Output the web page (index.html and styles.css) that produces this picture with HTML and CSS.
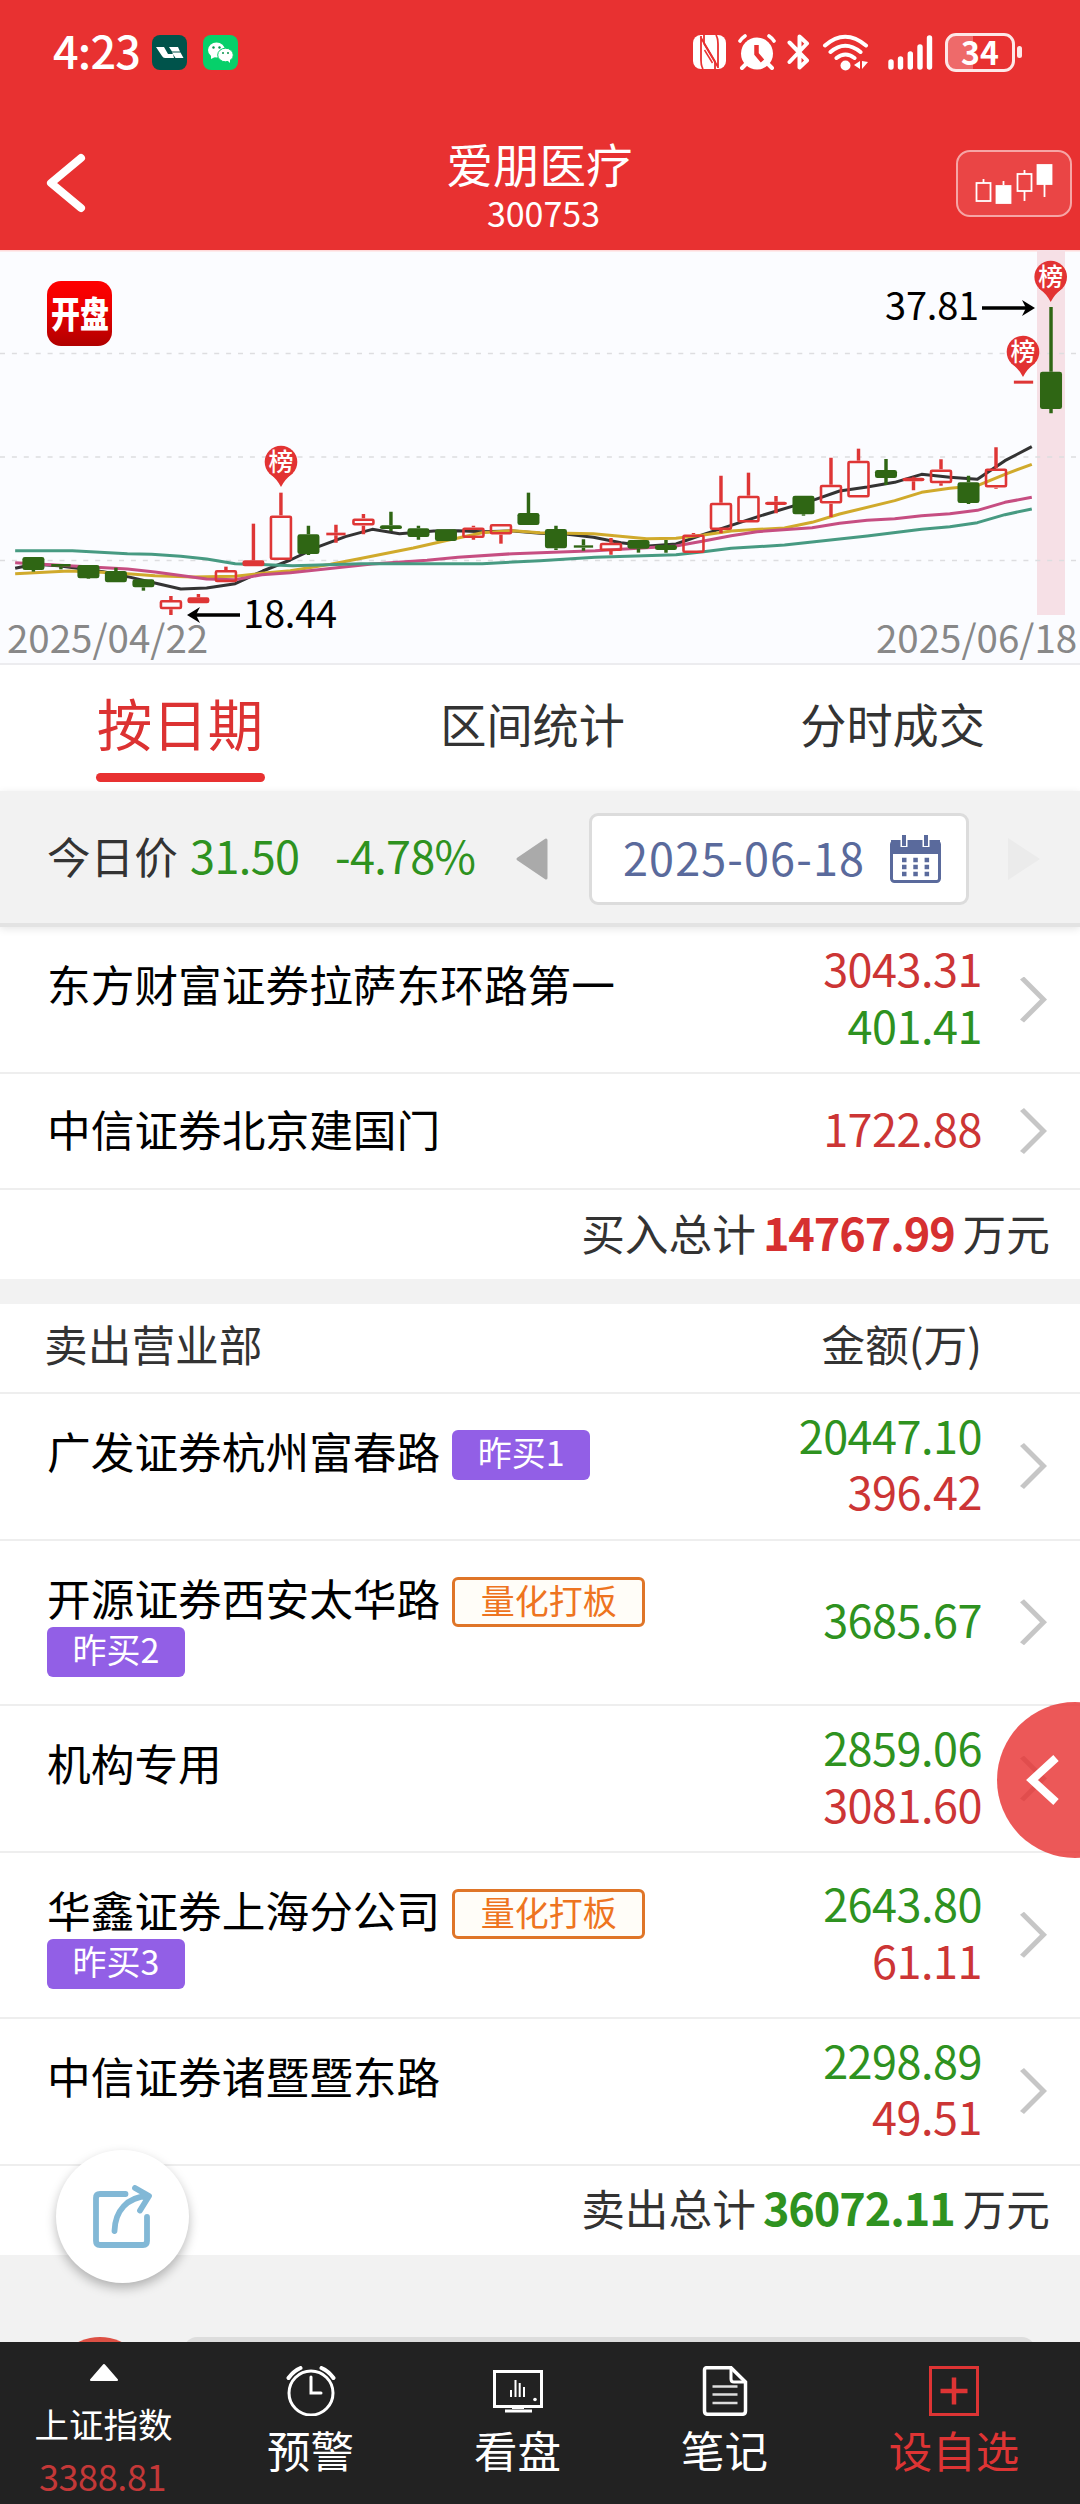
FILE: index.html
```html
<!DOCTYPE html>
<html lang="zh-CN">
<head>
<meta charset="utf-8">
<title>爱朋医疗 300753</title>
<link rel="stylesheet" href="styles.css">
</head>
<body>
<div class="phone">
  <header class="header">
    <div class="status">
      <span class="clock">4:23</span>
      <svg class="app-icon" width="35" height="35" viewBox="0 0 35 35"><rect width="35" height="35" rx="8" fill="#00534b"/><path d="M4 12h8l4 7h5l1 4h-9q-2 0-3-2zM17 12h9l2 4.500h-8zM20 17.500h8.500l3 5.500h-8z" fill="#fff"/></svg>
      <svg class="app-icon second" width="35" height="35" viewBox="0 0 35 35"><rect width="35" height="35" rx="8" fill="#06d06a"/><ellipse cx="13.500" cy="15" rx="8.500" ry="7.600" fill="#fff"/><path d="M8 20l0 4 4-2z" fill="#fff"/><ellipse cx="22.500" cy="20" rx="7.800" ry="6.800" fill="#fff" stroke="#06d06a"/><path d="M24 25l3 3v-4z" fill="#fff"/><g fill="#07934c"><circle cx="10.500" cy="12.500" r="1.200"/><circle cx="16.500" cy="12.500" r="1.200"/><circle cx="20" cy="18" r="1"/><circle cx="25" cy="18" r="1"/></g></svg>
      <span class="spacer"></span>
      <svg width="33" height="34" viewBox="0 0 33 34"><rect width="33" height="34" rx="8" fill="#fff"/><path d="M8 1v24q0 6 2 9M7.500 2L22 26.500V34" fill="none" stroke="#e83131" stroke-width="1.800"/><path d="M25 33V9q0-6-2-9M11 8.500L25 32M11 8.500V0" fill="none" stroke="#e83131" stroke-width="1.800"/><path d="M11.500 15l8 13" stroke="#e83131" stroke-width="1.500"/></svg>
      <svg class="s-alarm" width="38" height="36" viewBox="0 0 38 36" fill="none" stroke="#fff" stroke-linecap="round"><circle cx="19" cy="19.500" r="16" fill="#fff" stroke="none"/><path d="M2 7q2-3 5-5M36 7q-2-3-5-5" stroke-width="3.600"/><path d="M8 30l-4 4M30 30l4 4" stroke-width="4"/><path d="M18.500 11v9l6 7" stroke="#e83131" stroke-width="4.500" stroke-linecap="butt"/></svg>
      <svg class="s-bt" width="23" height="38" viewBox="0 0 23 38"><path d="M2.500 9.500L20 27.500 12.500 34.500V3.500L20 10.500 2.500 29" fill="none" stroke="#fff" stroke-width="4" stroke-linejoin="round" stroke-linecap="round"/></svg>
      <svg class="s-wifi" width="47" height="37" viewBox="0 0 47 37" fill="none" stroke="#fff" stroke-width="4" stroke-linecap="round"><path d="M3 11.500q20-17.500 41 0M8.500 18q14.500-12.500 30 0M14.500 24q9-7 18 0"/><circle cx="23.500" cy="31.500" r="5" fill="#fff" stroke="none"/><path d="M38 27v8l-6-4zM40 27v8l6-7z" fill="#fff" stroke="none"/></svg>
      <svg class="s-signal" width="45" height="37" viewBox="0 0 45 37" stroke="#fff" stroke-width="5.400" stroke-linecap="round"><path d="M3 28v5M12.500 25v8M22.300 20v13M32 13v20M41.500 4v29"/></svg>
      <div class="battery"><span>34</span></div><i class="nub"></i>
    </div>
    <div class="titlebar">
      <svg class="back" width="46" height="62" viewBox="0 0 46 62"><path d="M38 6L8 31l30 25" fill="none" stroke="#fff" stroke-width="8" stroke-linecap="round" stroke-linejoin="round"/></svg>
      <div class="title"><h1>爱朋医疗</h1><span>300753</span></div>
      <div class="kbtn"><svg width="80" height="42" viewBox="0 0 80 42" fill="none" stroke="#fff" stroke-width="1.800"><rect x="1.500" y="19" width="14" height="18"/><path d="M8.500 15v4M28.500 17v4M49.500 6v4M49.500 27v10M69.500 19v14"/><rect x="21.500" y="22" width="14" height="17" fill="#fff"/><rect x="42.500" y="10" width="14" height="17"/><rect x="62.500" y="1" width="14" height="19" fill="#fff"/></svg></div>
    </div>
  </header>

  <section class="chart">
    <svg id="kline" width="1080" height="413" viewBox="0 0 1080 413">
      <rect width="1080" height="1.500" y="0" fill="#ffdada"/>
      <rect x="1037" y="0" width="28" height="365" fill="#f6e0e6"/>
      <path d="M0 103.500H1080M0 207H1080M0 310.500H1080" stroke="#dddde0" stroke-width="1.500" stroke-dasharray="5 6.900" fill="none"/>
      <g id="averages" transform="scale(.34439 .33333)"></g>
      <g id="candles" transform="scale(.34439 .33333)"></g>
      <g class="pins">
        <g transform="translate(281 212)"><path d="M-12 11Q-4 17 0 25 4 17 12 11z"/><circle r="16.300"/><text y="8.500">榜</text></g>
        <g transform="translate(1023 102)"><path d="M-12 11Q-4 17 0 25 4 17 12 11z"/><circle r="16.300"/><text y="8.500">榜</text></g>
        <g transform="translate(1050.700 27)"><path d="M-12 11Q-4 17 0 25 4 17 12 11z"/><circle r="16.300"/><text y="8.500">榜</text></g>
      </g>
      <g fill="none" stroke="#000" stroke-width="3.500"><path d="M240 365H190M982 58h50"/></g>
      <path d="M187 365l13-8-4 8 4 8zM1035 58l-13-8 4 8-4 8z"/>
      <g class="labels"><text x="243" y="378">18.44</text><text x="885" y="70">37.81</text></g>
      <g class="dates"><text x="7" y="403">2025/04/22</text><text x="876" y="403">2025/06/18</text></g>
      <defs><linearGradient id="logo" x2="0" y2="1"><stop offset="0" stop-color="#ff0000"/><stop offset=".35" stop-color="#f00000"/><stop offset="1" stop-color="#b00000"/></linearGradient></defs>
      <rect x="47" y="31" width="65" height="65" rx="14" fill="url(#logo)"/>
      <text class="logo" transform="translate(51 77.500) scale(1 1.270)">开盘</text>
    </svg>
  </section>

  <nav class="tabs"><a class="active">按日期</a><a>区间统计</a><a>分时成交</a></nav>

  <section class="daybar">
    <span class="label">今日价</span><span class="price">31.50</span><span class="change">-4.78%</span>
    <svg class="prev" width="32" height="42" viewBox="0 0 32 42"><path d="M30 2v38L2 21z" fill="#aaa" stroke="#aaa" stroke-width="3" stroke-linejoin="round"/></svg>
    <div class="datebox"><span>2025-06-18</span><svg width="51" height="48" viewBox="0 0 51 48"><rect x="1.500" y="6.500" width="48" height="40" rx="3" fill="#fff" stroke="#5a6a9c" stroke-width="3"/><path d="M1 5h49v14H1z" fill="#5a6a9c"/><path d="M14 0v12M36 0v12" stroke="#fff" stroke-width="7"/><path d="M14 0v11M36 0v11" stroke="#5a6a9c" stroke-width="4"/><path d="M12 25h28M12 32h28M12 39h28" stroke="#5a6a9c" stroke-width="4.500" stroke-dasharray="4.500 6.800"/></svg></div>
    <svg class="next" width="32" height="42" viewBox="0 0 32 42"><path d="M0 0v42L32 21z" fill="#ebebeb"/></svg>
  </section>

  <main>
    <section class="list">
      <div class="row"><div class="name"><b>东方财富证券拉萨东环路第一</b></div><div class="nums"><span class="red">3043.31</span><span class="green">401.41</span></div><i class="chev"></i></div>
      <div class="row short"><div class="name"><b>中信证券北京建国门</b></div><div class="nums"><span class="red">1722.88</span></div><i class="chev"></i></div>
      <div class="total">买入总计<strong class="red">14767.99</strong>万元</div>
    </section>
    <section class="list">
      <div class="head"><span>卖出营业部</span><span>金额(万)</span></div>
      <div class="row"><div class="name"><b>广发证券杭州富春路</b><em class="tag">昨买1</em></div><div class="nums"><span class="green">20447.10</span><span class="red">396.42</span></div><i class="chev"></i></div>
      <div class="row tall"><div class="name"><b>开源证券西安太华路</b><em class="tag quant">量化打板</em><em class="tag">昨买2</em></div><div class="nums"><span class="green">3685.67</span></div><i class="chev"></i></div>
      <div class="row"><div class="name"><b>机构专用</b></div><div class="nums"><span class="green">2859.06</span><span class="red">3081.60</span></div><i class="chev"></i></div>
      <div class="row tall"><div class="name"><b>华鑫证券上海分公司</b><em class="tag quant">量化打板</em><em class="tag">昨买3</em></div><div class="nums"><span class="green">2643.80</span><span class="red">61.11</span></div><i class="chev"></i></div>
      <div class="row"><div class="name"><b>中信证券诸暨暨东路</b></div><div class="nums"><span class="green">2298.89</span><span class="red">49.51</span></div><i class="chev"></i></div>
      <div class="total sell">卖出总计<strong class="green">36072.11</strong>万元</div>
    </section>
    <div class="peek"><i class="dot"></i><i class="bar"></i></div>
  </main>

  <footer class="bottom">
    <div class="index"><svg width="30" height="19" viewBox="0 0 30 19"><path d="M15 2L28 17H2z" fill="#fff" stroke="#fff" stroke-width="2" stroke-linejoin="round"/></svg><span>上证指数</span><em>3388.81</em></div>
    <div class="item"><svg width="50" height="50" viewBox="0 0 50 50" fill="none" stroke="#fff" stroke-width="3" stroke-linecap="round"><circle cx="25" cy="27" r="22"/><path d="M25 11v16h10"/><path d="M2.500 12q5-7 12-10M47.500 12q-5-7-12-10" stroke-width="4"/></svg><span>预警</span></div>
    <div class="item"><svg width="50" height="50" viewBox="0 0 50 50" fill="none" stroke="#fff" stroke-width="3"><rect x="1.500" y="5.500" width="47" height="35"/><path d="M12 45h27M19 41.500h12" /><path d="M18 24v7M22.500 14v17M26.700 17v14M31 21v10" stroke-width="2"/><circle cx="42" cy="33.500" r="1.800" fill="#fff" stroke="none"/></svg><span>看盘</span></div>
    <div class="item"><svg width="50" height="50" viewBox="0 0 50 50" fill="none" stroke="#fff" stroke-width="3.500"><path d="M6.500 1.700H31L45.500 16V45q0 3.300-3.300 3.300H7.800Q4.500 48.300 4.500 45V4q0-2.300 2-2.300z"/><path d="M31 2v11q0 3 3 3h11" stroke-width="3"/><path d="M12.500 20.500h25M12.500 28.500h25M12.500 37h25" stroke="#ddd" stroke-width="2.500"/></svg><span>笔记</span></div>
    <div class="item add"><svg width="50" height="50" viewBox="0 0 50 50" fill="none" stroke="#de3434" stroke-width="3"><rect x="1.500" y="1.500" width="47" height="47"/><path d="M11.500 25h27M25 11.500v27" stroke-width="4.500"/></svg><span>设自选</span></div>
  </footer>

  <div class="drawer"><svg width="34" height="50" viewBox="0 0 34 50"><path d="M30 3L6 25l24 22" fill="none" stroke="#fff" stroke-width="8"/></svg></div>
  <div class="fab"><svg width="60" height="64" viewBox="0 0 60 64" fill="none" stroke="#82b8d6" stroke-width="5.800" stroke-linecap="round" stroke-linejoin="round"><path d="M32.500 9H7Q3 9 3 13V56q0 4 4 4H50q4 0 4-4V32"/><path d="M21.500 46C22 26 34 12 55 11M42 3l14 8-9 14.500"/></svg></div>
</div>
<script src="chart.js"></script>
</body>
</html>
```
FILE: styles.css
```css
* { box-sizing: border-box; }
body { margin: 0; background: #f2f2f2; color: #333; font-family: "Noto Sans CJK SC", sans-serif; }
h1, em, b, i { font-style: normal; font-weight: 400; margin: 0; }
svg { display: block; flex: none; }
.phone { position: relative; width: 1080px; height: 2504px; overflow: hidden; display: flex; flex-direction: column; }
.red { color: #cc3535; }
.green { color: #2e9220; }

.header { height: 250px; flex: none; background: #e83131; color: #fff; display: flex; flex-direction: column; }
.status { height: 104px; padding: 0 58px 0 53px; display: flex; align-items: center; }
.clock { font-size: 45px; font-weight: 500; line-height: 60px; width: 99px; margin-top: -5px; letter-spacing: -.8px; white-space: nowrap; }
.app-icon.second { margin-left: 16px; }
.spacer { flex: 1; }
.s-alarm { margin-left: 12px; }
.s-bt { margin-left: 11px; }
.s-wifi { margin-left: 12px; }
.s-signal { margin-left: 19px; }
.battery { width: 70px; height: 39px; margin-left: 12px; border: 3px solid #fde8e8; border-radius: 11px; background: linear-gradient(90deg, #ee6a6a 25px, transparent 25px); display: flex; align-items: center; justify-content: center; }
.battery span { font-size: 32px; font-weight: 700; line-height: 32px; margin-top: -3px; }
.nub { width: 5px; height: 12px; border-radius: 3px; background: #fde8e8; margin-left: 2px; }
.titlebar { flex: 1; display: flex; align-items: flex-start; justify-content: space-between; padding: 46px 8px 0 43px; }
.back { margin-top: 2px; }
.title { display: flex; flex-direction: column; align-items: center; margin: -17px 0 0 42px; }
.title h1 { font-size: 46.500px; line-height: 60px; margin-left: -8px; }
.title span { font-size: 34px; line-height: 40px; }
.kbtn { width: 116px; height: 67px; border: 2px solid #f6a5a5; border-radius: 14px; background: #ea4545; padding: 12px 0 0 17px; }

.chart { height: 415px; flex: none; background: #fbfcff; border-bottom: 2px solid #ececef; }
#kline text { font-family: "Noto Sans CJK SC", sans-serif; }
.pins { fill: #e23333; }
.pins text { fill: #fff; font-size: 25px; font-weight: 500; text-anchor: middle; }
.labels { font-size: 38px; letter-spacing: -.2px; }
.dates { font-size: 38.500px; fill: #888; }
.logo { font-size: 29px; font-weight: 900; fill: #fff; }

.tabs { height: 126px; flex: none; background: #fff; display: flex; justify-content: space-between; align-items: center; padding: 0 95px 0 96px; }
.tabs a { font-size: 46.200px; line-height: 60px; margin-top: -10px; }
.tabs .active { width: 169px; height: 99px; margin-top: 0; padding: 3px 1px 0 0; font-size: 55.500px; line-height: 80px; color: #dc3232; text-align: center; position: relative; }
.tabs .active::after { content: ""; position: absolute; left: 0; right: 0; bottom: -4px; height: 9px; border-radius: 5px; background: #e83131; }

.daybar { height: 136px; flex: none; background: #f2f2f2; border-bottom: 4px solid #e3e3e3; box-shadow: 0 2px 8px rgba(0,0,0,.1); display: flex; align-items: center; padding: 3px 0 0 47px; position: relative; z-index: 1; }
.daybar span { line-height: 56px; white-space: nowrap; margin-top: -8px; }
.label { font-size: 43.600px; width: 143px; }
.price { font-size: 45px; color: #2e9220; width: 145px; letter-spacing: -.6px; }
.change { font-size: 45px; color: #2e9220; width: 181px; letter-spacing: -.7px; }
.datebox { width: 380px; height: 92px; border: 3px solid #dcdcdc; border-radius: 9px; background: #fff; margin-left: 41px; padding: 0 25px 0 31px; display: flex; align-items: center; justify-content: space-between; }
.datebox span { color: #5a6a9c; font-size: 45px; letter-spacing: 1.100px; margin-top: -3px; }
.next { margin-left: 39px; }

.list { background: #fff; }
.list + .list { margin-top: 25px; }
.row { display: flex; height: 147px; border-bottom: 2px solid #eee; padding: 0 32px 0 47px; align-items: center; }
.row.short { height: 116px; }
.row.tall { height: 165.500px; }
.name { align-self: flex-start; width: 700px; padding-top: 36px; display: flex; flex-wrap: wrap; column-gap: 12px; color: #000; }
.short .name { padding-top: 34px; }
.name b { font-size: 43.700px; line-height: 50px; height: 50px; position: relative; top: -5px; white-space: nowrap; }
.tag { height: 50px; line-height: 44px; font-size: 34px; padding: 0 25.500px; border-radius: 6px; background: #925fe6; color: #fff; }
.tag.quant { background: #fffdf8; border: 3px solid #df7528; color: #ee7420; line-height: 40px; }
.nums { flex: 1; display: flex; flex-direction: column; align-items: flex-end; margin: -6px 38px 0 0; }
.nums span { font-size: 45px; line-height: 56.500px; letter-spacing: -.5px; }
.chev { width: 27px; height: 46px; flex: none; margin-right: 1px; background: #c6c6c6; clip-path: polygon(0 3px, 4px 0, 27px 23px, 4px 46px, 0 43px, 20px 23px); }
.total { height: 89px; display: flex; justify-content: flex-end; align-items: center; padding: 0 30px 6px 0; font-size: 43.700px; line-height: 60px; white-space: nowrap; }
.total strong { font-size: 45px; letter-spacing: -1.100px; margin: 0 8px 0 7px; }
.total .red { color: #d63030; }
.head { height: 89.500px; border-bottom: 2px solid #eee; display: flex; justify-content: space-between; padding: 9px 98px 0 44px; font-size: 43.700px; line-height: 60px; }
.peek { height: 89px; position: relative; overflow: hidden; }
.dot { position: absolute; left: 49px; top: 82px; width: 102px; height: 102px; border-radius: 50%; background: #dd5044; }
.bar { position: absolute; left: 184px; right: 45px; top: 82px; height: 60px; border-radius: 13px; background: #ddd; }

.bottom { position: absolute; left: 0; right: 0; bottom: 0; height: 162px; background: #222; color: #fff; display: grid; grid-template-columns: 207px 207px 207px 207px 252px; }
.bottom > div { display: flex; flex-direction: column; align-items: center; }
.item { padding-top: 24px; font-size: 43.500px; }
.item span { line-height: 60px; margin-top: 4px; }
.add { color: #de3434; }
.index { padding-top: 21px; font-size: 34.500px; }
.index span { line-height: 50px; margin-top: 16px; }
.index em { color: #c43838; font-size: 36px; line-height: 50px; margin: 2px 2px 0 0; letter-spacing: -.4px; }

.drawer { position: absolute; left: 997px; top: 1702px; width: 156px; height: 156px; border-radius: 50%; background: rgba(232,49,49,.81); padding: 53px 0 0 29px; }
.fab { position: absolute; left: 56px; top: 2150px; width: 133px; height: 133px; border-radius: 50%; background: #fff; box-shadow: 0 5px 11px rgba(0,0,0,.27); padding: 35px 0 0 37px; }
```
FILE: chart.js
```js
const NS = 'http://www.w3.org/2000/svg';
function add(parent, tag, attrs) {
  const el = document.createElementNS(NS, tag);
  for (const k in attrs) el.setAttribute(k, attrs[k]);
  parent.appendChild(el);
}

// Moving averages: colour and points
const averages = [
  ['#333', '44,955 100,943 170,947 300,965 370,980 440,997 525,1017 600,1014 683,1001 763,963 843,930 925,890 1003,860 1081,838 1160,851 1260,843 1330,842 1400,845 1490,843 1568,850 1648,853 1723,862 1803,878 1883,888 1963,882 2043,853 2123,826 2203,799 2368,748 2438,723 2518,711 2598,697 2676,673 2758,682 2838,688 2918,632 2996,590'],
  ['#d0aa2c', '44,971 200,963 330,968 450,977 560,981 683,979 760,970 843,962 960,943 1050,925 1200,894 1290,873 1400,848 1490,842 1568,848 1723,851 1878,866 1963,865 2043,855 2123,843 2203,838 2278,834 2358,817 2438,792 2598,752 2676,727 2758,715 2838,707 2918,673 2996,643'],
  ['#c64e82', '44,938 200,947 370,957 450,966 600,987 683,989 760,974 843,968 1080,942 1240,931 1330,922 1490,911 1568,908 1728,902 1878,893 1963,888 2043,873 2123,857 2198,845 2358,833 2438,820 2518,811 2598,806 2676,797 2758,791 2838,781 2918,757 2996,742'],
  ['#479a82', '44,902 210,902 370,911 440,913 525,919 600,927 683,941 850,947 1050,941 1400,941 1490,936 1568,932 1728,922 1963,914 2043,905 2123,895 2278,885 2518,858 2676,838 2758,830 2838,818 2918,794 2996,777']
];
for (const [stroke, points] of averages)
  add(document.getElementById('averages'), 'polyline', { points, stroke, fill: 'none', 'stroke-width': 9, 'stroke-linejoin': 'round' });

// Daily candles: kind (g fall, r rise, f flat rise), high, body top, body bottom, low
const days = [
  ['g',921,921,960,965],['g',942,942,950,958],['g',945,945,985,987],['g',953,963,997,997],['g',988,988,1012,1022],
  ['r',1038,1050,1078,1095],['f',1032,1042,1060,1060],['r',950,960,997,997],['f',821,931,949,949],['r',728,796,930,930],
  ['g',827,853,912,915],['f',824,848,856,878],['r',792,805,827,853],['g',785,826,837,843],['g',827,835,861,869],
  ['g',838,838,873,873],['r',827,832,864,869],['r',822,822,854,881],['g',728,789,825,825],['g',827,837,895,900],
  ['g',868,886,893,902],['r',864,878,903,914],['g',870,870,896,908],['g',870,885,900,908],['r',849,853,909,909],
  ['r',677,758,840,850],['r',668,737,818,818],['f',738,755,765,790],['g',737,737,793,797],['r',623,704,761,801],
  ['r',596,632,743,743],['g',627,660,684,705],['f',680,683,694,721],['r',628,658,700,707],['g',677,697,759,762],
  ['r',592,655,713,716],['f',392,392,401,401],['g',171,365,477,490]
];
const candles = document.getElementById('candles');
days.forEach(([kind, high, top, bottom, low], i) => {
  const x = 97 + 79.86 * i;
  const color = kind === 'g' ? '#2f6614' : '#de3636';
  const w = bottom - top < 10 ? 56 : 64;
  add(candles, 'path', { d: `M${x} ${high}V${top}M${x} ${bottom}V${low}`, stroke: color, 'stroke-width': 10 });
  if (kind === 'r')
    add(candles, 'rect', { x: x - 29, y: top + 4, width: 58, height: bottom - top - 8, rx: 3, fill: 'none', stroke: color, 'stroke-width': 7.5 });
  else
    add(candles, 'rect', { x: x - w / 2, y: top, width: w, height: bottom - top, rx: w > 60 ? 7 : 0, fill: color });
});
```
